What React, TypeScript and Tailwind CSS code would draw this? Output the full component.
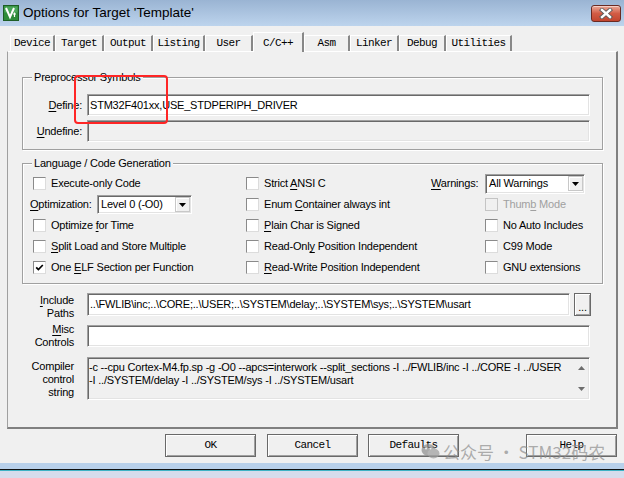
import React from "react";

const sans = "font-['Liberation_Sans',Arial,sans-serif]";
const mono = "font-['Liberation_Mono','DejaVu_Sans_Mono',monospace]";

// classic 3D borders
const sunken =
  "border border-t-[#a0a0a0] border-l-[#a0a0a0] border-r-white border-b-white shadow-[inset_1px_1px_0_#696969,inset_-1px_-1px_0_#e3e3e3]";
const raised =
  "border border-[#696969] shadow-[inset_1px_1px_0_#ffffff,inset_-1px_-1px_0_#a0a0a0]";
const etched = "border border-[#a0a0a0] shadow-[inset_1px_1px_0_#ffffff,1px_1px_0_#ffffff]";

const tabs = [
  { name: "Device", w: "w-[45px]" },
  { name: "Target", w: "w-[49px]" },
  { name: "Output", w: "w-[49px]" },
  { name: "Listing", w: "w-[52px]" },
  { name: "User", w: "w-[48px]" },
  { name: "C/C++", w: "w-[51px]", active: true },
  { name: "Asm", w: "w-[46px]" },
  { name: "Linker", w: "w-[49px]" },
  { name: "Debug", w: "w-[47px]" },
  { name: "Utilities", w: "w-[66px]" },
];

const U = ({ children }: { children: React.ReactNode }) => (
  <span className="underline underline-offset-[2px] decoration-1">{children}</span>
);

const Check = ({
  label,
  checked,
  disabled,
}: {
  label: React.ReactNode;
  checked?: boolean;
  disabled?: boolean;
}) => (
  <div className={`flex items-center gap-[5px] ${disabled ? "text-[#a0a0a0]" : "text-black"}`}>
    <span
      className={`w-[13px] h-[13px] shrink-0 flex items-center justify-center ${
        disabled
          ? "border border-[#c4c4c4] bg-[#f0f0f0]"
          : "border border-t-[#8a8a8a] border-l-[#8a8a8a] border-r-[#dcdcdc] border-b-[#dcdcdc] bg-white"
      }`}
    >
      {checked && (
        <svg width="9" height="9" viewBox="0 0 9 9">
          <path d="M1.2 4.3 L3.4 6.6 L7.8 2" fill="none" stroke="#000" strokeWidth="1.7" />
        </svg>
      )}
    </span>
    <span className="whitespace-nowrap">{label}</span>
  </div>
);

const DropArrow = () => (
  <span className="w-[15px] h-[15px] mr-[1px] flex items-center justify-center bg-[#f0f0f0] border border-[#c8c8c8] shadow-[inset_1px_1px_0_#ffffff]">
    <svg width="7" height="4" viewBox="0 0 7 4">
      <path d="M0 0 H7 L3.5 4 Z" fill="#000" />
    </svg>
  </span>
);

const Select = ({ value, w, h }: { value: string; w: string; h: string }) => (
  <div className={`${sunken} bg-white flex items-center ${w} ${h}`}>
    <span className="flex-1 pl-[3px] whitespace-nowrap">{value}</span>
    <DropArrow />
  </div>
);

export default function App() {
  return (
    <div
      className={`relative w-[624px] h-[478px] overflow-hidden bg-[#f0f0f0] flex flex-col text-[11px] tracking-[-0.2px] text-black ${sans}`}
    >
      {/* title bar */}
      <div className="h-[26px] shrink-0 flex items-start bg-linear-to-b from-[#9ab4d3] to-[#bdd4ed]">
        <svg width="16" height="16" viewBox="0 0 16 16" className="mt-[5px] ml-[3px]">
          <rect x="0.5" y="0.5" width="15" height="15" fill="#2e8b3a" stroke="#1d5e26" />
          <rect x="1.5" y="1.5" width="13" height="6" fill="#4aa65a" />
          <path d="M3 3 L7 12 L11 3" fill="none" stroke="#fff" strokeWidth="2" />
          <path d="M10 9 L13 9 M11.5 7.5 V12" stroke="#fff" strokeWidth="1.2" />
        </svg>
        <span className="ml-[4px] mt-[5px] text-[13.5px] tracking-normal text-black leading-[16px]">
          Options for Target 'Template'
        </span>
        <div className="flex-1" />
        <div className="mt-[5px] mr-[3px] w-[30px] h-[17px] rounded-[3px] border border-[#6a2a22] bg-linear-to-b from-[#e9a898] via-[#d25c45] to-[#c2452f] flex items-center justify-center shadow-[inset_0_1px_0_#f6cfc5]">
          <svg width="14" height="11" viewBox="0 0 14 11">
            <path d="M3 2 L11 9 M11 2 L3 9" stroke="#5a5a5a" strokeWidth="4.2" strokeLinecap="square" />
            <path d="M3 2 L11 9 M11 2 L3 9" stroke="#fff" strokeWidth="2.4" strokeLinecap="square" />
          </svg>
        </div>
      </div>

      {/* tabs */}
      <div className={`mt-[6px] h-[19px] pl-[10px] flex items-end ${mono} text-[11px] tracking-[-0.6px]`}>
        {tabs.map((t) =>
          t.active ? (
            <div
              key={t.name}
              className={`${t.w} h-[20px] -mb-[1px] relative z-10 bg-[#f0f0f0] border-t border-l border-white border-r-2 border-r-[#888] flex justify-center pt-[2px]`}
            >
              {t.name}
            </div>
          ) : (
            <div
              key={t.name}
              className={`${t.w} h-[16px] bg-[#f0f0f0] border-t border-l border-white border-r-2 border-r-[#888] flex items-center justify-center`}
            >
              {t.name}
            </div>
          )
        )}
      </div>

      {/* tab page */}
      <div className="ml-[7px] w-[611px] h-[378px] border-t border-t-white border-l border-l-[#a0a0a0] border-r-2 border-r-[#808080] border-b-2 border-b-[#808080] pl-[14px] flex flex-col">
        {/* Preprocessor Symbols */}
        <div className={`relative mt-[25px] w-[581px] h-[73px] ${etched} pt-[16px] flex flex-col gap-[4px]`}>
          <span className="absolute -top-[8px] left-[9px] px-[2px] bg-[#f0f0f0] leading-[14px]">
            Preprocessor Symbols
          </span>
          <div className="flex items-center h-[22px]">
            <span className="w-[59px] text-right">
              <U>D</U>efine:
            </span>
            <div className={`ml-[5px] w-[503px] h-[22px] ${sunken} bg-white flex items-center pl-[2px]`}>
              STM32F401xx,USE_STDPERIPH_DRIVER
            </div>
          </div>
          <div className="flex items-center h-[22px]">
            <span className="w-[59px] text-right">
              <U>U</U>ndefine:
            </span>
            <div className={`ml-[5px] w-[503px] h-[22px] ${sunken} bg-[#f0f0f0]`} />
          </div>
        </div>

        {/* Language / Code Generation */}
        <div className={`relative mt-[13px] w-[581px] h-[121px] ${etched} pt-[9px] pl-[7px] flex flex-col`}>
          <span className="absolute -top-[8px] left-[9px] px-[2px] bg-[#f0f0f0] leading-[14px]">
            Language / Code Generation
          </span>
          <div className="flex items-center h-[21px]">
            <div className="w-[216px] pl-[3px]">
              <Check label="Execute-only Code" />
            </div>
            <div className="w-[185px]">
              <Check
                label={
                  <>
                    Strict <U>A</U>NSI C
                  </>
                }
              />
            </div>
            <div className="flex items-center">
              <span className="w-[54px]">
                <U>W</U>arnings:
              </span>
              <Select value="All Warnings" w="w-[100px]" h="h-[20px]" />
            </div>
          </div>
          <div className="flex items-center h-[21px]">
            <div className="w-[216px] flex items-center">
              <span className="w-[67px]">
                <U>O</U>ptimization:
              </span>
              <Select value="Level 0 (-O0)" w="w-[95px]" h="h-[19px]" />
            </div>
            <div className="w-[185px]">
              <Check
                label={
                  <>
                    Enum <U>C</U>ontainer always int
                  </>
                }
              />
            </div>
            <div className="pl-[54px]">
              <Check
                disabled
                label={
                  <>
                    Thum<U>b</U> Mode
                  </>
                }
              />
            </div>
          </div>
          <div className="flex items-center h-[21px]">
            <div className="w-[216px] pl-[3px]">
              <Check
                label={
                  <>
                    Optimize <U>f</U>or Time
                  </>
                }
              />
            </div>
            <div className="w-[185px]">
              <Check
                label={
                  <>
                    <U>P</U>lain Char is Signed
                  </>
                }
              />
            </div>
            <div className="pl-[54px]">
              <Check label="No Auto Includes" />
            </div>
          </div>
          <div className="flex items-center h-[21px]">
            <div className="w-[216px] pl-[3px]">
              <Check
                label={
                  <>
                    <U>S</U>plit Load and Store Multiple
                  </>
                }
              />
            </div>
            <div className="w-[185px]">
              <Check
                label={
                  <>
                    Read-Onl<U>y</U> Position Independent
                  </>
                }
              />
            </div>
            <div className="pl-[54px]">
              <Check label="C99 Mode" />
            </div>
          </div>
          <div className="flex items-center h-[21px]">
            <div className="w-[216px] pl-[3px]">
              <Check
                checked
                label={
                  <>
                    One <U>E</U>LF Section per Function
                  </>
                }
              />
            </div>
            <div className="w-[185px]">
              <Check
                label={
                  <>
                    <U>R</U>ead-Write Position Independent
                  </>
                }
              />
            </div>
            <div className="pl-[54px]">
              <Check label="GNU extensions" />
            </div>
          </div>
        </div>

        {/* Include Paths */}
        <div className="mt-[9px] flex items-start h-[23px]">
          <div className="w-[52px] text-right leading-[13px] pt-[1px]">
            <div>
              <U>I</U>nclude
            </div>
            <div>Paths</div>
          </div>
          <div className={`ml-[13px] w-[483px] h-[23px] ${sunken} bg-white flex items-center pl-[2px] whitespace-nowrap overflow-hidden`}>
            ..\FWLIB\inc;..\CORE;..\USER;..\SYSTEM\delay;..\SYSTEM\sys;..\SYSTEM\usart
          </div>
          <div className={`ml-[4px] w-[17px] h-[23px] ${raised} bg-[#f0f0f0] flex items-end justify-center pb-[3px] leading-[10px]`}>
            ...
          </div>
        </div>

        {/* Misc Controls */}
        <div className="mt-[9px] flex items-center h-[22px]">
          <div className="w-[52px] text-right leading-[13px]">
            <div>
              <U>M</U>isc
            </div>
            <div>Controls</div>
          </div>
          <div className={`ml-[13px] w-[503px] h-[22px] ${sunken} bg-white`} />
        </div>

        {/* Compiler control string */}
        <div className="mt-[10px] flex items-start h-[43px]">
          <div className="w-[52px] text-right leading-[13px] pt-[3px]">
            <div>Compiler</div>
            <div>control</div>
            <div>string</div>
          </div>
          <div className={`ml-[13px] w-[503px] h-[43px] ${sunken} bg-[#f0f0f0] flex`}>
            <div className="flex-1 pl-[1px] pt-[3px] leading-[13px] whitespace-nowrap overflow-hidden">
              <div>-c --cpu Cortex-M4.fp.sp -g -O0 --apcs=interwork --split_sections -I ../FWLIB/inc -I ../CORE -I ../USER</div>
              <div>-I ../SYSTEM/delay -I ../SYSTEM/sys -I ../SYSTEM/usart</div>
            </div>
            <div className="w-[16px] flex flex-col items-center justify-between py-[8px]">
              <svg width="7" height="4" viewBox="0 0 7 4">
                <path d="M0 4 H7 L3.5 0 Z" fill="#6d6d6d" />
              </svg>
              <svg width="7" height="4" viewBox="0 0 7 4">
                <path d="M0 0 H7 L3.5 4 Z" fill="#6d6d6d" />
              </svg>
            </div>
          </div>
        </div>
      </div>

      {/* buttons */}
      <div className={`mt-[5px] h-[23px] flex justify-end pr-[7px] ${mono} text-[11px] tracking-[-0.6px]`}>
        <button className={`w-[91px] h-[23px] ${raised} bg-[#f0f0f0]`}>OK</button>
        <button className={`ml-[11px] w-[91px] h-[23px] ${raised} bg-[#f0f0f0]`}>Cancel</button>
        <button className={`ml-[10px] w-[91px] h-[23px] ${raised} bg-[#f0f0f0]`}>Defaults</button>
        <button className={`ml-[67px] w-[91px] h-[23px] ${raised} bg-[#f0f0f0]`}>Help</button>
      </div>

      {/* bottom window edge */}
      <div className="mt-[6px] flex flex-col flex-1">
        <div className="h-[6px] bg-[#b8d0ea]" />
        <div className="h-[1px] bg-[#111]" />
        <div className="h-[1px] bg-[#3eb2c4]" />
        <div className="flex-1 bg-[#d6dcec]" />
      </div>

      {/* highlight box */}
      <div className="absolute left-[74px] top-[75px] w-[94px] h-[49px] border-2 border-[#ff2626] rounded-[4px]" />

      {/* watermark */}
      <div className="absolute left-[421px] top-[439px] flex items-center gap-[3px] text-[17px] tracking-normal text-[#8c8c8c]/70 font-['Noto_Sans_CJK_SC',sans-serif] pointer-events-none">
        <svg width="19" height="17" viewBox="0 0 19 17" className="opacity-70">
          <ellipse cx="7.5" cy="7" rx="7" ry="6" fill="#8c8c8c" />
          <ellipse cx="12.5" cy="10.5" rx="6" ry="5" fill="#9d9d9d" />
          <circle cx="5" cy="5.5" r="1" fill="#f0f0f0" />
          <circle cx="9.5" cy="5.5" r="1" fill="#f0f0f0" />
        </svg>
        <span>公众号 · STM32码农</span>
      </div>
    </div>
  );
}
